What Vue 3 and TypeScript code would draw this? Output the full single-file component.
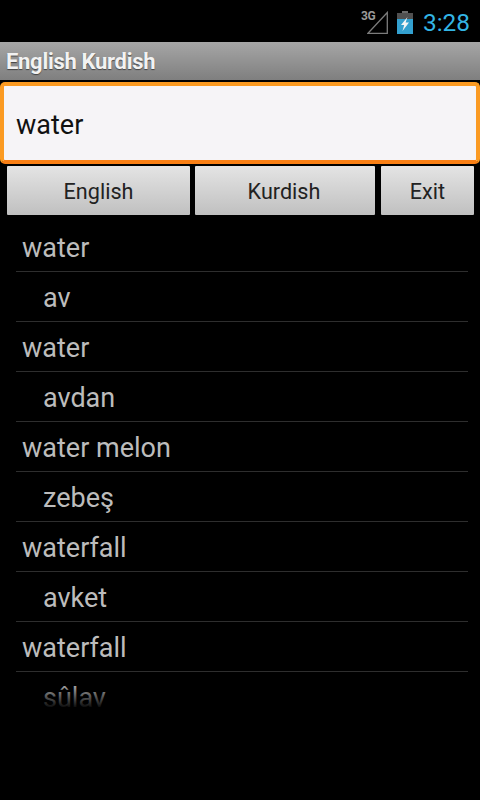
<script setup lang="ts">
interface Row { text: string; sub: boolean }
const rows: Row[] = [
  { text: 'water', sub: false },
  { text: 'av', sub: true },
  { text: 'water', sub: false },
  { text: 'avdan', sub: true },
  { text: 'water melon', sub: false },
  { text: 'zebeş', sub: true },
  { text: 'waterfall', sub: false },
  { text: 'avket', sub: true },
  { text: 'waterfall', sub: false },
  { text: 'sûlav', sub: true },
]
</script>

<template>
  <div class="screen">
    <header class="status">
      <div class="net">
        <span class="g3">3G</span>
        <svg class="signal" width="21" height="23" viewBox="0 0 21 23">
          <path d="M1 22.3 L20.3 1.5 V22.3 Z" fill="none" stroke="#7c7c7c" stroke-width="1.3" />
        </svg>
      </div>
      <svg class="battery" width="16" height="23" viewBox="0 0 16 23">
        <rect x="5" y="0" width="6" height="2" fill="#6a6a6a" />
        <rect x="0" y="2" width="16" height="21" fill="#505050" />
        <rect x="0" y="8" width="16" height="15" fill="#33a0cf" />
        <path d="M10.5 6 L4 14 H7.2 L5.5 20 L12 11.5 H8.6 Z" fill="#f4f4f4" />
      </svg>
      <span class="clock">3:28</span>
    </header>
    <div class="title"><span class="title-text">English Kurdish</span></div>
    <div class="search"><span>water</span></div>
    <div class="buttons">
      <button class="btn en">English</button>
      <button class="btn ku">Kurdish</button>
      <button class="btn ex">Exit</button>
    </div>
    <div class="list">
      <div v-for="(r, i) in rows" :key="i" class="row" :class="{ sub: r.sub }">{{ r.text }}</div>
      <div class="fade"></div>
    </div>
  </div>
</template>

<style>
html, body { background: #000; margin: 0; }
</style>

<style scoped>
.screen {
  width: 480px;
  height: 800px;
  background: #000;
  overflow: hidden;
  font-family: Roboto, "Liberation Sans", sans-serif;
}
.status {
  height: 42px;
  display: flex;
  align-items: center;
  justify-content: flex-end;
  padding-right: 10px;
  box-sizing: border-box;
}
.net { position: relative; width: 28px; height: 24px; margin-right: 9px; margin-top: 2px; }
.g3 {
  position: absolute;
  left: 1px;
  top: 0;
  font-size: 12px;
  font-weight: 700;
  color: #9a9a9a;
  line-height: 13px;
  letter-spacing: -0.4px;
}
.signal { position: absolute; right: 0; bottom: 0; }
.battery { margin-right: 10px; margin-top: 3px; }
.clock { color: #33b5e5; font-size: 24.4px; line-height: 42px; margin-top: 3px; }
.title {
  height: 38px;
  line-height: 40px;
  padding-left: 6px;
  box-sizing: border-box;
  background: linear-gradient(#a6a6a6, #7f7f7f);
  color: #f2f2f2;
  font-size: 22px;
  font-weight: 700;
  text-shadow: 0 1px 1px #444;
  letter-spacing: -0.3px;
}
.search {
  margin: 2px 0 0;
  height: 82px;
  box-sizing: border-box;
  border: 4px solid #fb9a22;
  border-bottom-color: #f97f14;
  border-radius: 5px;
  background: #f6f4f7;
  display: flex;
  align-items: center;
  padding: 3px 0 0 12px;
  color: #111;
  font-size: 27px;
}
.buttons {
  display: flex;
  margin-top: 2px;
  padding-left: 7px;
  height: 49px;
}
.btn {
  border: 0;
  padding: 2px 0 0;
  height: 49px;
  background: linear-gradient(#e4e4e4, #c0c0c0);
  color: #222;
  font-family: inherit;
  font-size: 21.6px;
  border-radius: 1px;
}
.en { width: 183px; margin-right: 5px; }
.ku { width: 180px; margin-right: 6px; padding-right: 2px; }
.ex { width: 93px; }
.list {
  position: relative;
  margin: 7px 12px 0 16px;
  height: 490px;
  overflow: hidden;
}
.row {
  height: 50px;
  box-sizing: border-box;
  line-height: 53px;
  padding-left: 6px;
  border-bottom: 1px solid #2e2e2e;
  color: #bcbcbc;
  font-size: 27px;
}
.row.sub { padding-left: 27px; }
.fade {
  position: absolute;
  left: 0;
  right: 0;
  bottom: 0;
  height: 30px;
  background: linear-gradient(rgba(0,0,0,0), #000 90%);
}
</style>
